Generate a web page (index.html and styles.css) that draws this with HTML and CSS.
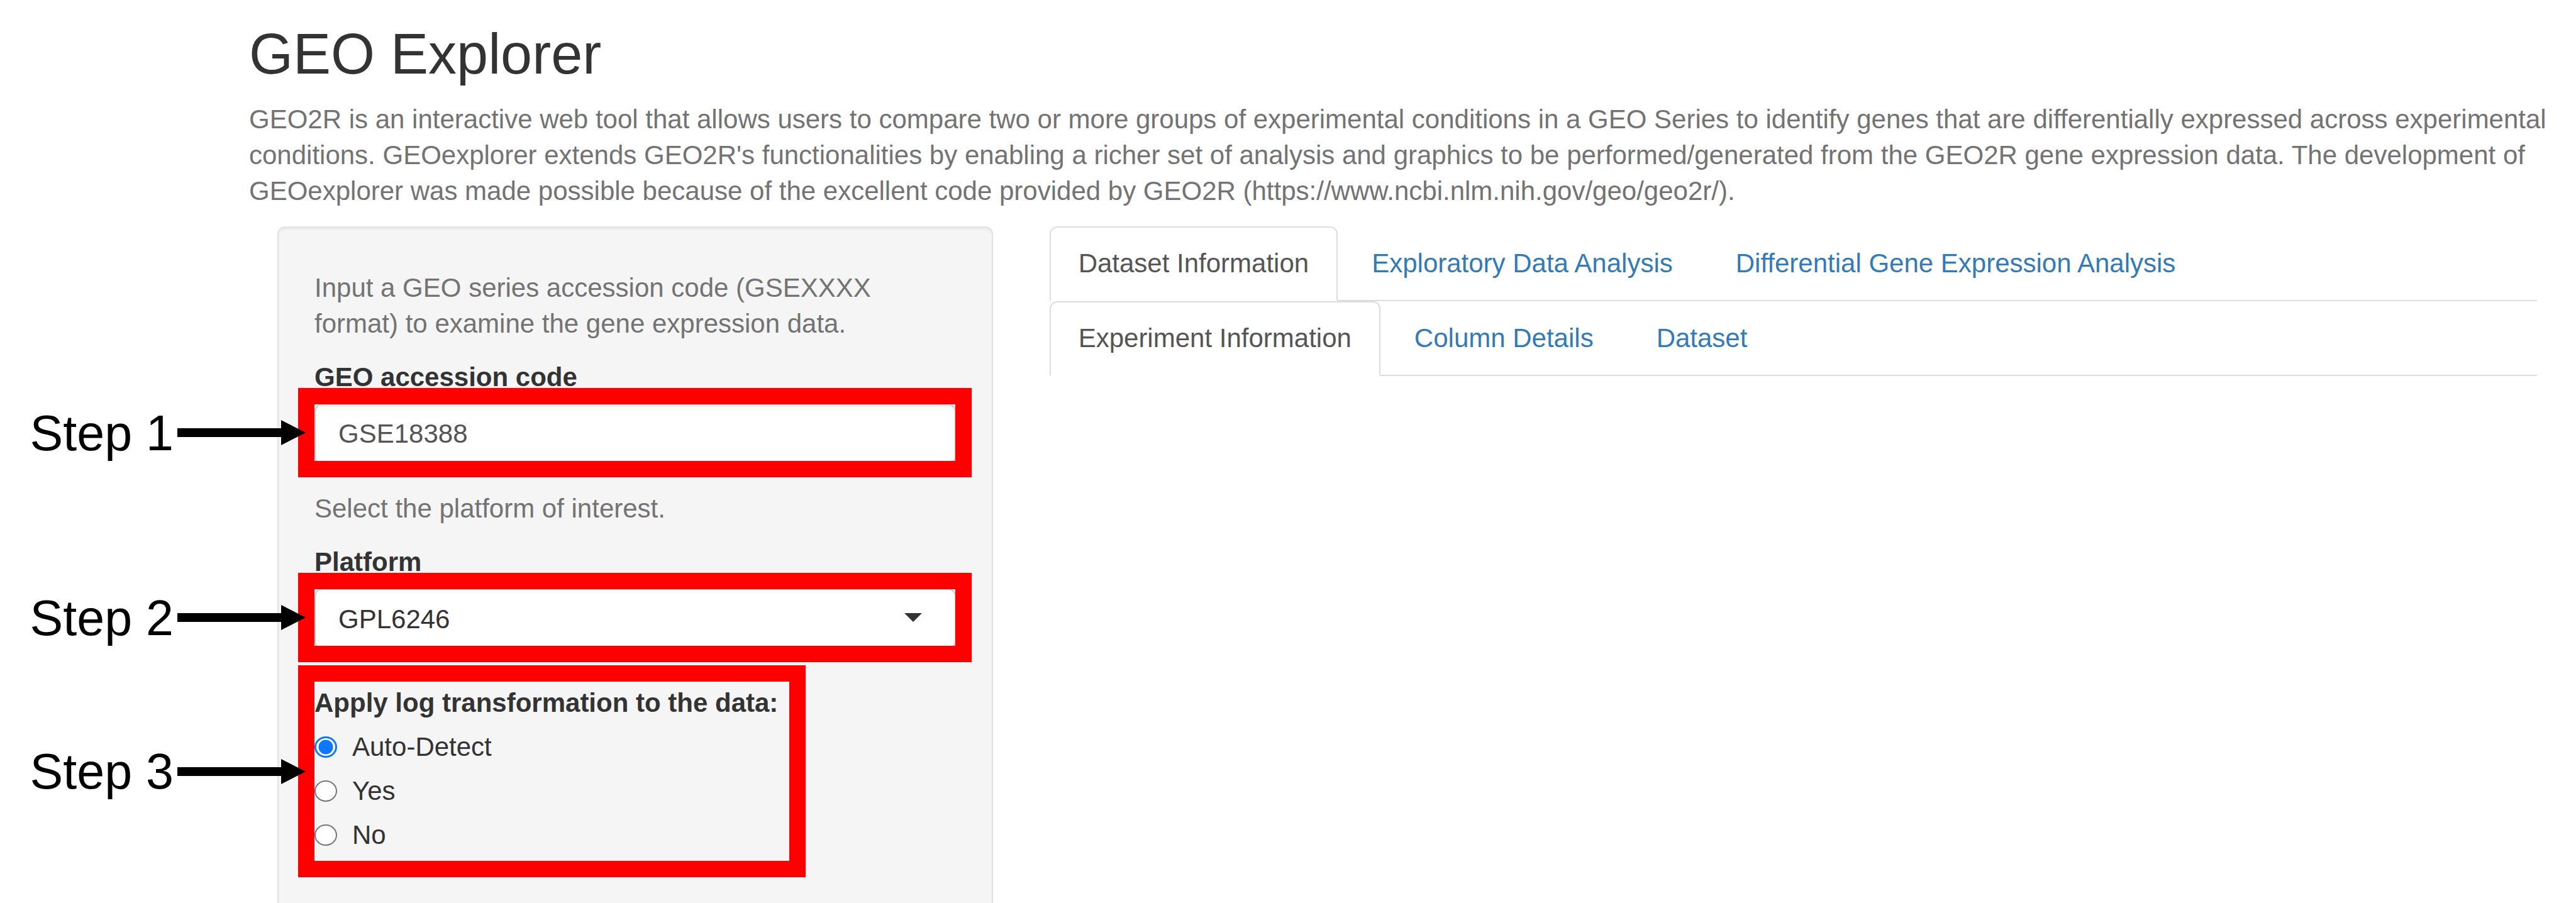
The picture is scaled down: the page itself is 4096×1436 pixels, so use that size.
FILE: index.html
```html
<!DOCTYPE html>
<html lang="en">
<head>
<meta charset="utf-8">
<title>GEO Explorer</title>
<link rel="stylesheet" href="styles.css">
</head>
<body>
<div class="page">
  <header class="intro">
    <h1 class="title">GEO Explorer</h1>
    <p class="help">GEO2R is an interactive web tool that allows users to compare two or more groups of experimental conditions in a GEO Series to identify genes that are differentially expressed across experimental conditions. GEOexplorer extends GEO2R's functionalities by enabling a richer set of analysis and graphics to be performed/generated from the GEO2R gene expression data. The development of GEOexplorer was made possible because of the excellent code provided by GEO2R (https://www.ncbi.nlm.nih.gov/geo/geo2r/).</p>
  </header>
  <div class="columns">
    <form class="well">
      <p class="help">Input a GEO series accession code (GSEXXXX format) to examine the gene expression data.</p>
      <label class="label" for="accession">GEO accession code</label>
      <div class="field highlight">
        <input class="control control-text" id="accession" type="text" value="GSE18388">
        <div class="callout"><span>Step 1</span><svg class="arrow" viewBox="0 0 204 40" aria-hidden="true"><path d="M0 13h165V0l39 20-39 20V27H0z"/></svg></div>
      </div>
      <p class="help">Select the platform of interest.</p>
      <label class="label" for="platform">Platform</label>
      <div class="field highlight">
        <select class="control" id="platform"><option>GPL6246</option></select>
        <svg class="caret" viewBox="0 0 28 14" aria-hidden="true"><path d="M0 0h28L14 14z"/></svg>
        <div class="callout"><span>Step 2</span><svg class="arrow" viewBox="0 0 204 40" aria-hidden="true"><path d="M0 13h165V0l39 20-39 20V27H0z"/></svg></div>
      </div>
      <div class="choices highlight" role="radiogroup" aria-labelledby="log-label">
        <span class="label" id="log-label">Apply log transformation to the data:</span>
        <label class="choice"><input class="radio" type="radio" name="log" checked>Auto-Detect</label>
        <label class="choice"><input class="radio" type="radio" name="log">Yes</label>
        <label class="choice"><input class="radio" type="radio" name="log">No</label>
        <div class="callout"><span>Step 3</span><svg class="arrow" viewBox="0 0 204 40" aria-hidden="true"><path d="M0 13h165V0l39 20-39 20V27H0z"/></svg></div>
      </div>
    </form>
    <main class="results">
      <nav class="tabs">
        <a class="tab active" href="#dataset-information">Dataset Information</a>
        <a class="tab" href="#exploratory">Exploratory Data Analysis</a>
        <a class="tab" href="#differential">Differential Gene Expression Analysis</a>
      </nav>
      <nav class="tabs">
        <a class="tab active" href="#experiment">Experiment Information</a>
        <a class="tab" href="#columns">Column Details</a>
        <a class="tab" href="#dataset">Dataset</a>
      </nav>
    </main>
  </div>
</div>
</body>
</html>
```

FILE: styles.css
```css
* {
  box-sizing: border-box;
}

body {
  margin: 0;
  background: #fff;
  color: #333;
  font: 42px/57px "Liberation Sans", Arial, sans-serif;
}

.page {
  display: flex;
  flex-direction: column;
  min-height: 100vh;
  padding: 37px 17px 0 396px;
}

.title {
  margin: 0 0 25px;
  font-size: 90px;
  line-height: 99px;
  font-weight: 400;
}

.help {
  margin: 0 0 28px;
  color: #737373;
}

.columns {
  flex: 1;
  display: grid;
  grid-template-columns: minmax(0, 1fr) minmax(0, 2fr);
}

/* Sidebar form */

.well {
  margin: 0 45px;
  padding: 67px 57px 0;
  background: #f5f5f5;
  border: 2px solid #e3e3e3;
  border-bottom: 0;
  border-radius: 12px 12px 0 0;
  box-shadow: inset 0 3px 3px rgba(0, 0, 0, 0.05);
}

.label {
  display: block;
  margin-bottom: 14px;
  font-weight: 700;
}

.field {
  position: relative;
  margin-bottom: 42px;
}

.control {
  display: block;
  width: 100%;
  height: 96px;
  margin: 0;
  padding: 0 36px;
  appearance: none;
  background: #fff;
  border: 2px solid #ccc;
  border-radius: 12px;
  color: #333;
  font: inherit;
}

.control-text {
  color: #555;
  box-shadow: inset 0 3px 3px rgba(0, 0, 0, 0.075);
}

.caret {
  position: absolute;
  top: 39px;
  right: 54px;
  width: 28px;
  height: 14px;
  fill: #333;
  pointer-events: none;
}

.choices {
  position: relative;
  display: flex;
  flex-direction: column;
  gap: 13px;
  width: fit-content;
  margin-top: 57px;
}

.choices .label {
  margin: 0;
}

.choice {
  display: flex;
  align-items: center;
  gap: 24px;
}

.radio {
  width: 36px;
  height: 34px;
  margin: 0;
  appearance: none;
  background: #fff;
  border: 2px solid #767676;
  border-radius: 50%;
}

.radio:checked {
  border: 3px solid #0d78ff;
  background: radial-gradient(circle, #0d78ff 11px, #fff 12px);
}

/* Red step frames and their callouts */

.highlight::after {
  content: "";
  position: absolute;
  inset: -25px -25px -21px -26px;
  border: 26px solid #f00;
  pointer-events: none;
}

.choices.highlight::after {
  inset: -31px -44px -39px -26px;
}

.callout {
  position: absolute;
  z-index: 1;
  top: 0;
  bottom: 4px;
  right: calc(100% + 14px);
  display: flex;
  align-items: center;
  gap: 6px;
  color: #000;
  font-size: 79px;
  white-space: nowrap;
}

.choices .callout {
  bottom: -8px;
}

.arrow {
  flex: none;
  width: 204px;
  height: 40px;
}

/* Tabs */

.results {
  padding: 0 45px;
}

.tabs {
  display: flex;
  gap: 8px;
  border-bottom: 2px solid #ddd;
}

.tab {
  margin-bottom: -2px;
  padding: 28px 44px 30px;
  border: 2px solid transparent;
  border-radius: 12px 12px 0 0;
  color: #337ab7;
  text-decoration: none;
}

.tab.active {
  background: #fff;
  border-color: #ddd #ddd #fff;
  color: #555;
}
```
